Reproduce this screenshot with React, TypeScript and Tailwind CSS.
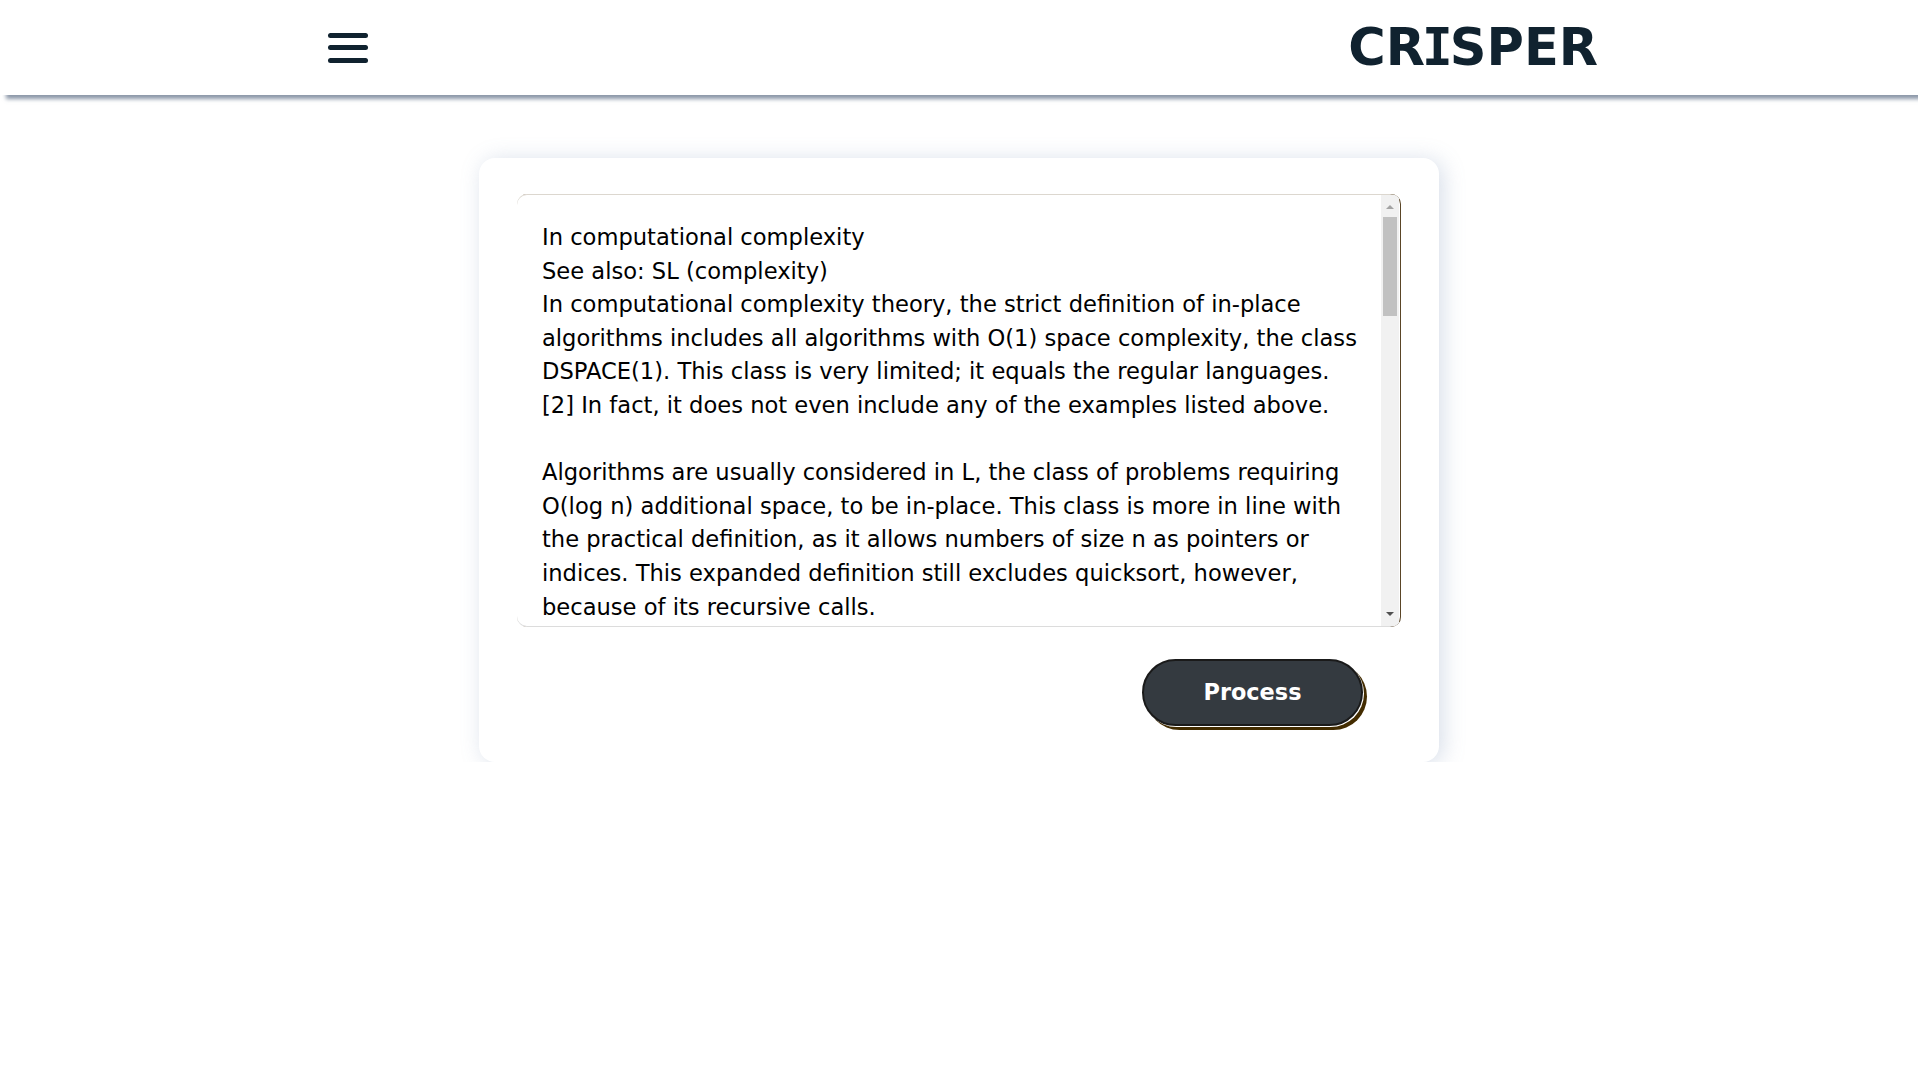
import React from 'react'

// lines broken as the textarea wraps them
const lines = [
  'In computational complexity',
  'See also: SL (complexity)',
  'In computational complexity theory, the strict definition of in-place',
  'algorithms includes all algorithms with O(1) space complexity, the class',
  'DSPACE(1). This class is very limited; it equals the regular languages.',
  '[2] In fact, it does not even include any of the examples listed above.',
  '',
  'Algorithms are usually considered in L, the class of problems requiring',
  'O(log n) additional space, to be in-place. This class is more in line with',
  'the practical definition, as it allows numbers of size n as pointers or',
  'indices. This expanded definition still excludes quicksort, however,',
  'because of its recursive calls.',
]

export default function App() {
  return (
    <div className="min-h-screen bg-white" style={{ fontFamily: '"DejaVu Sans", sans-serif' }}>
      {/* header */}
      <header className="h-[95px] bg-white shadow-[6px_4px_4px_rgba(100,116,139,0.75)] relative z-10">
        <div className="w-[1270px] mx-auto h-full flex items-center justify-between">
          <button className="w-[40px] h-[34px] flex flex-col justify-between py-[2px] ml-[4px]">
            <span className="block h-[5px] w-full rounded-full bg-[#10222f]" />
            <span className="block h-[5px] w-full rounded-full bg-[#10222f]" />
            <span className="block h-[5px] w-full rounded-full bg-[#10222f]" />
          </button>
          <h1 className="text-[51px] font-bold leading-none text-[#10222f] mr-[-4px]">
            CR
            <span className="mx-[-3px]" style={{ fontFamily: '"DejaVu Sans Mono", monospace' }}>
              I
            </span>
            SPER
          </h1>
        </div>
      </header>

      {/* main */}
      <main className="overflow-hidden pt-[63px]">
        <div className="w-[960px] mx-auto bg-white rounded-2xl shadow-[4px_2px_22px_rgba(110,135,175,0.28)] px-[38px] pt-[36px] pb-[36px]">
          <div className="flex h-[433px] rounded-[10px] overflow-hidden bg-white shadow-[inset_-1px_0_0_#5a4526,inset_0_1px_0_#dcd7cf,inset_0_-1px_0_#dcdcdc]">
            <div className="flex-1 overflow-hidden whitespace-pre pl-[25px] pr-[24px] pt-[27px] text-[22.6px] leading-[33.6px] text-black">
              {lines.join('\n')}
            </div>
            {/* scrollbar */}
            <div className="w-[18px] mr-[2px] my-[1px] bg-[#f1f1f1] flex flex-col items-center">
              <div className="h-[22px] w-full flex items-center justify-center pt-[2px]">
                <span className="block w-0 h-0 border-l-[4px] border-r-[4px] border-b-[4px] border-l-transparent border-r-transparent border-b-[#a3a3a3]" />
              </div>
              <div className="h-[99px] w-[14px] bg-[#c1c1c1]" />
              <div className="flex-1" />
              <div className="h-[22px] w-full flex items-center justify-center pb-[2px]">
                <span className="block w-0 h-0 border-l-[4px] border-r-[4px] border-t-[4px] border-l-transparent border-r-transparent border-t-[#505050]" />
              </div>
            </div>
          </div>
          <div className="flex justify-end mt-[32px] pr-[38px]">
            <button className="w-[221px] h-[67px] rounded-full bg-[#343a40] border-2 border-[#1a1a1a] text-white text-[22.4px] font-bold shadow-[1px_1px_0_#ffffff,4px_4px_0_#432c00]">
              Process
            </button>
          </div>
        </div>
      </main>
    </div>
  )
}
